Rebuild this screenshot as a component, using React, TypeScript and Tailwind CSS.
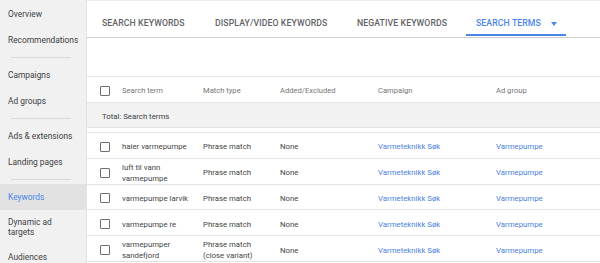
const navTop = ["Overview", "Recommendations"];
const navMid = ["Campaigns", "Ad groups"];
const navLow = ["Ads & extensions", "Landing pages"];

const rows = [
  { term: ["haier varmepumpe"], match: ["Phrase match"] },
  { term: ["luft til vann", "varmepumpe"], match: ["Phrase match"] },
  { term: ["varmepumpe larvik"], match: ["Phrase match"] },
  { term: ["varmepumpe re"], match: ["Phrase match"] },
  { term: ["varmepumper", "sandefjord"], match: ["Phrase match", "(close variant)"] },
];

const cols = "grid grid-cols-[35px_81px_77px_98px_118px_1fr] items-center";

function NavItem({ label, active = false }: { label: string; active?: boolean }) {
  return (
    <div className={`h-[26px] flex items-center pl-[8px] ${active ? "bg-[#e2e2e2] text-[#4a86e8]" : "text-[#3c4043]"}`}>
      {label}
    </div>
  );
}

function Divider() {
  return (
    <div className="h-[9px] flex items-center px-[11px]">
      <div className="h-px w-[60px] bg-[#d9d9d9]" />
    </div>
  );
}

function Checkbox() {
  return <div className="size-[10px] border-[1.5px] border-[#6e6e6e] rounded-[1px] ml-[13px]" />;
}

function Tab({ label, width, active = false, pad = "pl-[15px]" }: { label: string; width: string; active?: boolean; pad?: string }) {
  return (
    <div className={`relative h-full flex items-center pt-[9px] ${width} ${pad}`}>
      <span className={`font-medium text-[8.7px] tracking-[0.1px] ${active ? "text-[#4a86e8]" : "text-[#5f6368]"}`}>{label}</span>
      {active && (
        <>
          <span className="ml-[10px] mt-[1px] w-0 h-0 border-l-[3.5px] border-r-[3.5px] border-t-[4px] border-l-transparent border-r-transparent border-t-[#4a86e8]" />
          <div className="absolute left-0 right-0 bottom-[1px] h-[2px] bg-[#4a86e8]" />
        </>
      )}
    </div>
  );
}

export default function App() {
  return (
    <div className="w-[600px] h-[263px] overflow-hidden flex bg-white font-['Roboto',sans-serif]">
      <aside className="w-[87px] shrink-0 h-full bg-[#f1f1f1] border-r border-[#e3e3e3] pt-px text-[8.4px]">
        {navTop.map(l => <NavItem key={l} label={l} />)}
        <Divider />
        {navMid.map(l => <NavItem key={l} label={l} />)}
        <Divider />
        {navLow.map(l => <NavItem key={l} label={l} />)}
        <Divider />
        <NavItem label="Keywords" active />
        <div className="h-[34px] flex flex-col justify-center pl-[8px] text-[#3c4043] leading-[10px]">
          <span>Dynamic ad</span>
          <span>targets</span>
        </div>
        <NavItem label="Audiences" />
      </aside>

      <main className="flex-1 min-w-0 h-full border-t border-[#ececec]">
        <div className="h-[37px] flex border-b-[1.5px] border-[#cfcfcf]">
          <Tab label="SEARCH KEYWORDS" width="w-[113px]" />
          <Tab label="DISPLAY/VIDEO KEYWORDS" width="w-[142px]" />
          <Tab label="NEGATIVE KEYWORDS" width="w-[124px]" />
          <Tab label="SEARCH TERMS" width="w-[100px]" pad="pl-[10px]" active />
        </div>

        <div className="h-[39px] border-b border-[#e3e3e3]" />

        <div className={`${cols} h-[26px] pt-[3px] border-b border-[#e3e3e3] text-[7.6px] text-[#757575]`}>
          <Checkbox />
          <span>Search term</span>
          <span>Match type</span>
          <span>Added/Excluded</span>
          <span>Campaign</span>
          <span>Ad group</span>
        </div>

        <div className="h-[25px] flex items-center pt-[3px] pl-[15px] bg-[#f2f2f2] border-b border-[#e3e3e3] text-[7.8px] text-[#3c4043]">
          Total: Search terms
        </div>
        <div className="h-[5px] border-b border-[#e3e3e3]" />

        {rows.map((r, i) => (
          <div key={i} className={`${cols} h-[25.8px] pt-[3px] border-b border-[#e3e3e3] text-[7.8px] text-[#444] leading-[11px]`}>
            <Checkbox />
            <div className="flex flex-col">{r.term.map(t => <span key={t}>{t}</span>)}</div>
            <div className="flex flex-col">{r.match.map(t => <span key={t}>{t}</span>)}</div>
            <span>None</span>
            <span className="text-[#4a7fdc]">Varmeteknikk Søk</span>
            <span className="text-[#4a7fdc]">Varmepumpe</span>
          </div>
        ))}
      </main>
    </div>
  );
}
